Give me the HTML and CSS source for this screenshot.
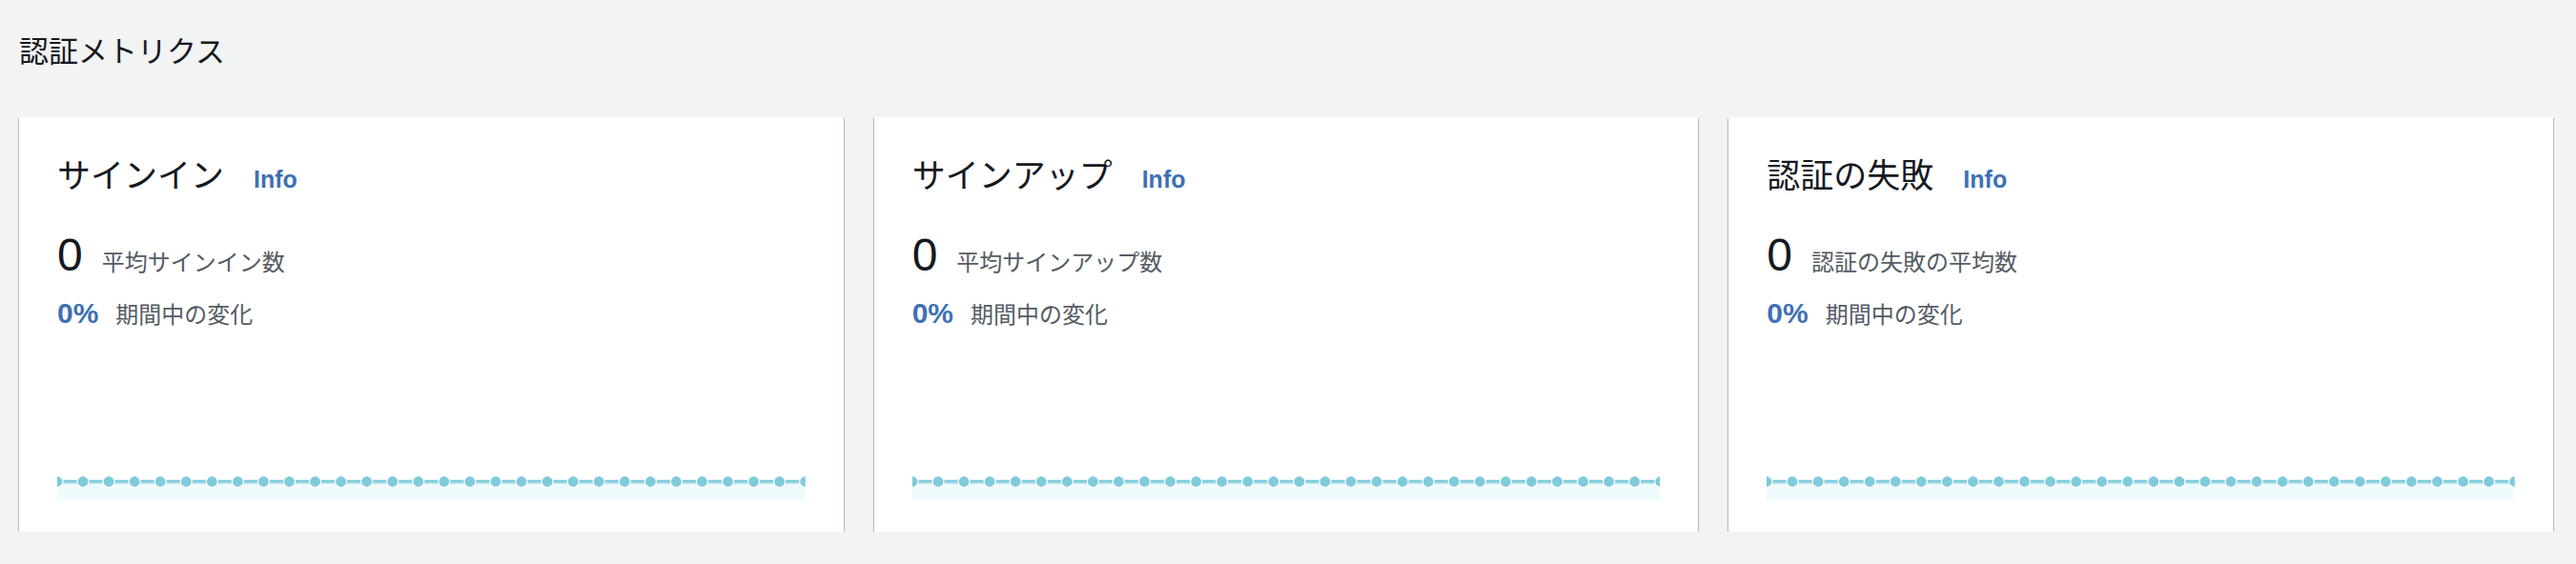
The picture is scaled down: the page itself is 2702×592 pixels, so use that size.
FILE: index.html
```html
<!DOCTYPE html>
<html lang="ja">
<head>
<meta charset="utf-8">
<title>認証メトリクス</title>
<link rel="stylesheet" href="styles.css">
</head>
<body>
<svg class="defs" width="0" height="0" aria-hidden="true">
  <symbol id="flat-chart" viewBox="0 0 785 27" preserveAspectRatio="none">
    <rect x="0" y="6.5" width="785" height="20.5" fill="#f0fbfd"/>
    <line x1="0" y1="8" x2="785" y2="8" stroke="#b4e3ed" stroke-width="2"/>
    <line x1="0" y1="6" x2="785" y2="6" stroke="#7fcbdc" stroke-width="2.5"/>
    <g fill="#7fcbdb" stroke="#ffffff" stroke-width="1.2">
      <circle cx="0" cy="6.5" r="6"/>
      <circle cx="27.07" cy="6.5" r="6"/>
      <circle cx="54.14" cy="6.5" r="6"/>
      <circle cx="81.21" cy="6.5" r="6"/>
      <circle cx="108.28" cy="6.5" r="6"/>
      <circle cx="135.34" cy="6.5" r="6"/>
      <circle cx="162.41" cy="6.5" r="6"/>
      <circle cx="189.48" cy="6.5" r="6"/>
      <circle cx="216.55" cy="6.5" r="6"/>
      <circle cx="243.62" cy="6.5" r="6"/>
      <circle cx="270.69" cy="6.5" r="6"/>
      <circle cx="297.76" cy="6.5" r="6"/>
      <circle cx="324.83" cy="6.5" r="6"/>
      <circle cx="351.9" cy="6.5" r="6"/>
      <circle cx="378.97" cy="6.5" r="6"/>
      <circle cx="406.03" cy="6.5" r="6"/>
      <circle cx="433.1" cy="6.5" r="6"/>
      <circle cx="460.17" cy="6.5" r="6"/>
      <circle cx="487.24" cy="6.5" r="6"/>
      <circle cx="514.31" cy="6.5" r="6"/>
      <circle cx="541.38" cy="6.5" r="6"/>
      <circle cx="568.45" cy="6.5" r="6"/>
      <circle cx="595.52" cy="6.5" r="6"/>
      <circle cx="622.59" cy="6.5" r="6"/>
      <circle cx="649.66" cy="6.5" r="6"/>
      <circle cx="676.72" cy="6.5" r="6"/>
      <circle cx="703.79" cy="6.5" r="6"/>
      <circle cx="730.86" cy="6.5" r="6"/>
      <circle cx="757.93" cy="6.5" r="6"/>
      <circle cx="785" cy="6.5" r="6"/>
    </g>
  </symbol>
</svg>

<main class="page">
  <h2 class="page-title">認証メトリクス</h2>
  <div class="cards">
    <section class="card">
      <div class="card-head">
        <h3 class="card-title">サインイン</h3>
        <a class="info" href="#">Info</a>
      </div>
      <div class="metric">
        <span class="value">0</span>
        <span class="label">平均サインイン数</span>
      </div>
      <div class="change">
        <span class="pct">0%</span>
        <span class="label">期間中の変化</span>
      </div>
      <svg class="chart" viewBox="0 0 785 27" preserveAspectRatio="none"><use href="#flat-chart"/></svg>
    </section>

    <section class="card">
      <div class="card-head">
        <h3 class="card-title">サインアップ</h3>
        <a class="info" href="#">Info</a>
      </div>
      <div class="metric">
        <span class="value">0</span>
        <span class="label">平均サインアップ数</span>
      </div>
      <div class="change">
        <span class="pct">0%</span>
        <span class="label">期間中の変化</span>
      </div>
      <svg class="chart" viewBox="0 0 785 27" preserveAspectRatio="none"><use href="#flat-chart"/></svg>
    </section>

    <section class="card">
      <div class="card-head">
        <h3 class="card-title">認証の失敗</h3>
        <a class="info" href="#">Info</a>
      </div>
      <div class="metric">
        <span class="value">0</span>
        <span class="label">認証の失敗の平均数</span>
      </div>
      <div class="change">
        <span class="pct">0%</span>
        <span class="label">期間中の変化</span>
      </div>
      <svg class="chart" viewBox="0 0 785 27" preserveAspectRatio="none"><use href="#flat-chart"/></svg>
    </section>
  </div>
</main>
</body>
</html>
```

FILE: styles.css
```css
html, body {
  margin: 0;
  padding: 0;
  background: #f2f3f3;
}

body {
  font-family: "Liberation Sans", "Noto Sans CJK JP", sans-serif;
  color: #16191f;
}

.defs {
  position: absolute;
  width: 0;
  height: 0;
  overflow: hidden;
}

.page {
  padding: 0 24px 0 20px;
}

.page-title {
  margin: 32px 0 0;
  font-family: "Noto Sans CJK JP", sans-serif;
  font-size: 31px;
  font-weight: 400;
  line-height: 40px;
  color: #16191f;
}

.cards {
  margin-top: 51px;
  display: grid;
  grid-template-columns: repeat(3, 1fr);
  gap: 32px;
}

.card {
  box-sizing: border-box;
  height: 435px;
  background: #ffffff;
  padding: 37px 40px 32px;
  display: flex;
  flex-direction: column;
  box-shadow: 0 1px 1px 0 rgba(0, 28, 36, 0.4),
              1px 1px 1px 0 rgba(0, 28, 36, 0.18),
              -1px 1px 1px 0 rgba(0, 28, 36, 0.18);
}

.card-head {
  display: flex;
  align-items: baseline;
  gap: 31px;
}

.card-title {
  margin: 0;
  font-family: "Noto Sans CJK JP", sans-serif;
  font-size: 35px;
  font-weight: 400;
  line-height: 44px;
  color: #16191f;
}

.info {
  font-family: "Liberation Sans", sans-serif;
  font-size: 25px;
  font-weight: 700;
  color: #3e70b4;
  text-decoration: none;
}

.metric {
  margin-top: 36px;
  display: flex;
  align-items: baseline;
  gap: 20px;
  height: 56px;
}

.value {
  font-family: "Liberation Sans", sans-serif;
  font-size: 48px;
  line-height: 56px;
  color: #16191f;
}

.label {
  font-family: "Noto Sans CJK JP", sans-serif;
  font-size: 24px;
  line-height: 32px;
  color: #545b64;
}

.change {
  margin-top: 15px;
  display: flex;
  align-items: baseline;
  gap: 18px;
  height: 36px;
}

.pct {
  font-family: "Liberation Sans", sans-serif;
  font-size: 30px;
  font-weight: 700;
  line-height: 36px;
  color: #3e70b4;
}

.chart {
  display: block;
  margin-top: auto;
  width: 100%;
  height: 27px;
}
```
